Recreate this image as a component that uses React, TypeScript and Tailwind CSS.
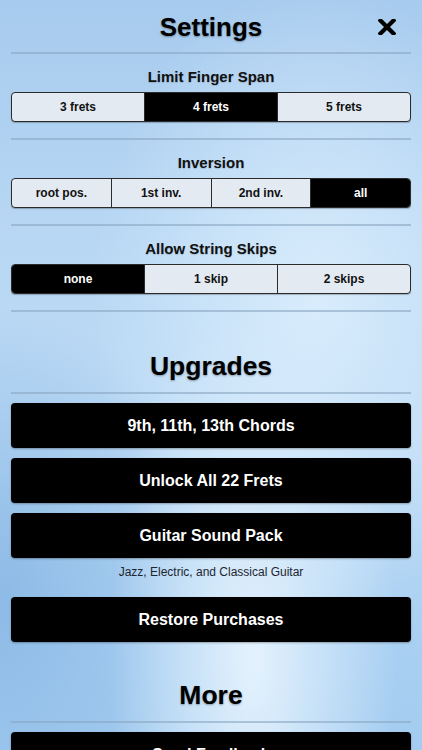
import { useState } from 'react';

const FONT = "font-['Liberation_Sans',Arial,sans-serif]";

interface SegmentedProps {
  options: string[];
  value: number;
  onChange: (i: number) => void;
}

function Segmented({ options, value, onChange }: SegmentedProps) {
  return (
    <div className="flex h-[30px] overflow-hidden rounded-[4px] border border-[#2b2b2b] bg-[#e4eaf1] shadow-[0_1px_1px_rgba(0,0,0,0.25)]">
      {options.map((opt, i) => {
        const selected = i === value;
        return (
          <button
            key={opt}
            onClick={() => onChange(i)}
            className={`flex-1 text-[12px] font-bold ${
              i > 0 ? 'border-l border-[#2b2b2b]' : ''
            } ${selected ? 'bg-black text-white' : 'text-[#111]'}`}
          >
            {opt}
          </button>
        );
      })}
    </div>
  );
}

function Divider() {
  return <div className="h-[2px] bg-[#8aa6c2]/60" />;
}

function Heading({ children }: { children: React.ReactNode }) {
  return (
    <h2 className="text-center text-[26.5px] font-bold leading-[27px] text-black [text-shadow:0_1px_2px_rgba(0,0,0,0.35)]">
      {children}
    </h2>
  );
}

function BigButton({ children }: { children: React.ReactNode }) {
  return (
    <button className="flex h-[45px] w-full items-center justify-center rounded-[4px] bg-black text-[16px] font-bold text-white shadow-[0_1px_2px_rgba(0,0,0,0.3)]">
      {children}
    </button>
  );
}

export default function App() {
  const [span, setSpan] = useState(1);
  const [inversion, setInversion] = useState(3);
  const [skips, setSkips] = useState(0);

  const sections = [
    { title: 'Limit Finger Span', options: ['3 frets', '4 frets', '5 frets'], value: span, set: setSpan },
    { title: 'Inversion', options: ['root pos.', '1st inv.', '2nd inv.', 'all'], value: inversion, set: setInversion },
    { title: 'Allow String Skips', options: ['none', '1 skip', '2 skips'], value: skips, set: setSkips },
  ];

  return (
    <div
      className={`${FONT} h-[750px] w-full overflow-hidden bg-[image:radial-gradient(ellipse_at_75%_40%,#d8ecfc_0%,transparent_50%),radial-gradient(ellipse_at_60%_88%,#e4f2fd_0%,transparent_40%),radial-gradient(ellipse_at_0%_80%,#8dbae6_0%,transparent_35%),linear-gradient(180deg,#a7cbee_0%,#b9d8f4_35%,#bcdaf5_60%,#a9d0f2_85%,#a3ccf0_100%)] px-[11px]`}
    >
      <div className="relative flex h-[52px] items-center justify-center pt-[2px]">
        <h1 className="text-[26px] font-bold leading-[27px] text-black [text-shadow:0_1px_2px_rgba(0,0,0,0.35)]">
          Settings
        </h1>
        <button className="absolute right-[15px] top-[19px]">
          <svg width="18" height="16" viewBox="0 0 18 16">
            <path d="M2.5 1.5 L15.5 14.5 M15.5 1.5 L2.5 14.5" stroke="#000" strokeWidth="4.2" strokeLinecap="square" />
          </svg>
        </button>
      </div>
      <Divider />

      {sections.map((s) => (
        <div key={s.title}>
          <div className="pb-[16px] pt-[15px]">
            <h3 className="mb-[8px] text-center text-[15px] font-bold leading-[15px] text-[#111] [text-shadow:0_1px_1px_rgba(0,0,0,0.15)]">
              {s.title}
            </h3>
            <Segmented options={s.options} value={s.value} onChange={s.set} />
          </div>
          <Divider />
        </div>
      ))}

      <div className="pb-[12px] pt-[41px]">
        <Heading>Upgrades</Heading>
      </div>
      <Divider />

      <div className="flex flex-col gap-[10px] pt-[9px]">
        <BigButton>9th, 11th, 13th Chords</BigButton>
        <BigButton>Unlock All 22 Frets</BigButton>
        <BigButton>Guitar Sound Pack</BigButton>
      </div>
      <p className="mt-[8px] text-center text-[12px] leading-[13px] text-[#1d2530]">
        Jazz, Electric, and Classical Guitar
      </p>
      <div className="pt-[18px]">
        <BigButton>Restore Purchases</BigButton>
      </div>

      <div className="pb-[12px] pt-[40px]">
        <Heading>More</Heading>
      </div>
      <Divider />
      <div className="pt-[9px]">
        <BigButton>Send Feedback</BigButton>
      </div>
    </div>
  );
}
